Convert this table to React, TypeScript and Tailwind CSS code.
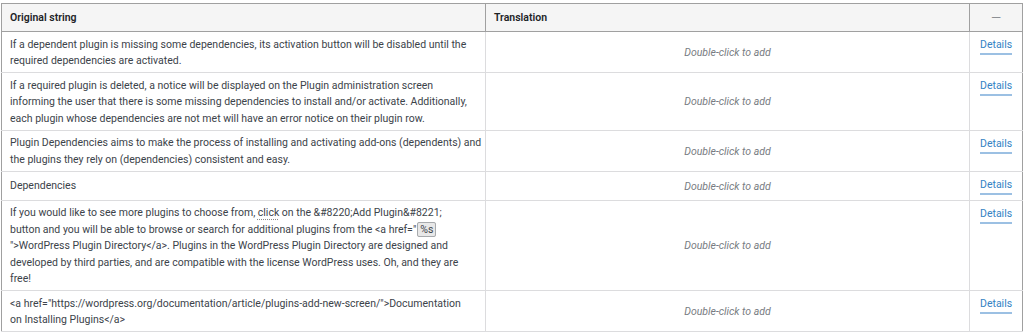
import React from "react"

type Row = { lines: React.ReactNode[] }

const rows: Row[] = [
   {
      lines: [
         "If a dependent plugin is missing some dependencies, its activation button will be disabled until the",
         "required dependencies are activated.",
      ],
   },
   {
      lines: [
         "If a required plugin is deleted, a notice will be displayed on the Plugin administration screen",
         "informing the user that there is some missing dependencies to install and/or activate. Additionally,",
         "each plugin whose dependencies are not met will have an error notice on their plugin row.",
      ],
   },
   {
      lines: [
         "Plugin Dependencies aims to make the process of installing and activating add-ons (dependents) and",
         "the plugins they rely on (dependencies) consistent and easy.",
      ],
   },
   { lines: ["Dependencies"] },
   {
      lines: [
         <>
            If you would like to see more plugins to choose from,{" "}
            <span className="underline decoration-dotted decoration-[#888] underline-offset-[3px]">click</span> on
            the &amp;#8220;Add Plugin&amp;#8221;
         </>,
         <>
            button and you will be able to browse or search for additional plugins from the &lt;a href="
            <span className="ml-px rounded-[2px] border border-[#a7aaad] bg-[#e8e8e8] px-[2px] leading-[13px]">%s</span>
         </>,
         '">WordPress Plugin Directory</a>. Plugins in the WordPress Plugin Directory are designed and',
         "developed by third parties, and are compatible with the license WordPress uses. Oh, and they are",
         "free!",
      ],
   },
   {
      lines: [
         '<a href="https://wordpress.org/documentation/article/plugins-add-new-screen/">Documentation',
         "on Installing Plugins</a>",
      ],
   },
]

export default function App() {
   return (
      <div className="h-[335px] w-[1024px] overflow-hidden bg-white pl-px pt-[3px] font-['Roboto',sans-serif] text-[10.5px] text-[#3c434a]">
         <table className="w-[1021px] table-fixed border-collapse">
            <colgroup>
               <col className="w-[484px]" />
               <col className="w-[484px]" />
               <col className="w-[53px]" />
            </colgroup>
            <thead>
               <tr className="h-[28px] bg-[#f5f5f5]">
                  <th className="border border-[#a0a0a0] px-2 text-left font-semibold text-[#1d2327]">Original string</th>
                  <th className="border border-[#a0a0a0] px-2 text-left font-semibold text-[#1d2327]">Translation</th>
                  <th className="border border-[#a0a0a0] text-center text-[13px] font-normal text-[#8c8f94]">—</th>
               </tr>
            </thead>
            <tbody>
               {rows.map((row, i) => (
                  <tr key={i}>
                     <td className="border border-[#dcdcde] border-l-[#a0a0a0] px-2 pt-[4.5px] pb-[2.5px] align-middle leading-[16.5px]">
                        {row.lines.map((l, j) => (
                           <div key={j} className="whitespace-nowrap">{l}</div>
                        ))}
                     </td>
                     <td className="border border-[#dcdcde] pt-[2px] text-center align-middle italic text-[#787c82]">
                        Double-click to add
                     </td>
                     <td className="border border-[#dcdcde] border-r-[#a0a0a0] px-[10px] pt-[5px] pb-[5px] align-top leading-[16px]">
                        <span className="inline-block border-b-2 border-[#9cc0e3] text-[#3582c4]">Details</span>
                     </td>
                  </tr>
               ))}
            </tbody>
         </table>
      </div>
   )
}
